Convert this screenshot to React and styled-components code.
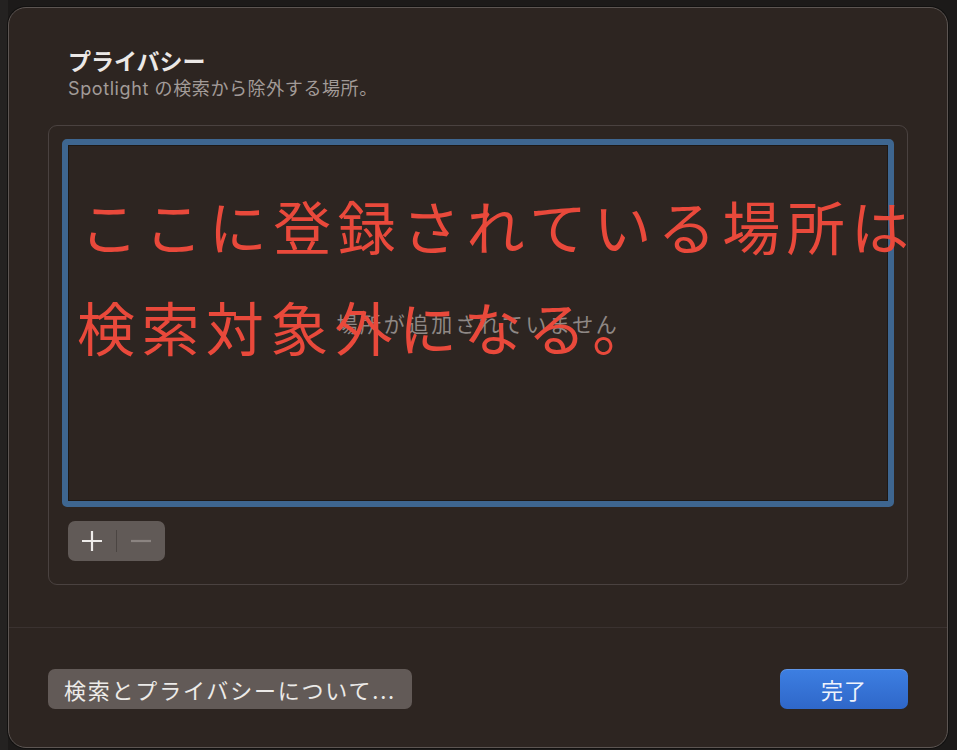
import React from 'react'
import styled, { createGlobalStyle } from 'styled-components'

const GlobalStyle = createGlobalStyle`
  html, body {
    margin: 0;
    padding: 0;
    background: #1d1b1a;
  }
  body {
    font-family: "Inter", "Noto Sans CJK JP", sans-serif;
    -webkit-font-smoothing: antialiased;
  }
`

const Page = styled.div`
  width: 957px;
  height: 750px;
  overflow: hidden;
  padding-top: 7px;
  box-sizing: border-box;
  background: linear-gradient(to right, #242221 0, #242221 8px, #1c1a19 8px);
`

const Dialog = styled.div`
  margin-left: 8px;
  width: 940px;
  height: 741px;
  box-sizing: border-box;
  background: #2d2521;
  border: 1px solid #5c5552;
  border-radius: 18px;
  box-shadow: 0 0 0 1px #121110;
  display: flex;
  flex-direction: column;
`

const Header = styled.div`
  padding: 37px 59px 0;
`

const Title = styled.div`
  font-family: "Noto Sans CJK JP", sans-serif;
  font-size: 23px;
  font-weight: 700;
  line-height: 30px;
  color: #ebe8e6;
`

const Subtitle = styled.div`
  margin-top: 1px;
  font-size: 18px;
  letter-spacing: 0.6px;
  line-height: 25px;
  color: #a29b98;
`

const Panel = styled.div`
  margin: 24px 39px 0;
  padding: 13px 13px 23px;
  border: 1px solid #4a4240;
  border-radius: 9px;
`

const List = styled.div`
  position: relative;
  height: 368px;
  box-sizing: border-box;
  border: 6px solid #3e6690;
  border-radius: 5px;
  box-shadow: inset 0 0 0 1px #1e1916;
  display: flex;
  align-items: center;
  justify-content: center;
`

const Placeholder = styled.div`
  font-family: "Noto Sans CJK JP", sans-serif;
  font-size: 21px;
  letter-spacing: 2.7px;
  color: #8f8885;
`

const Annotation = styled.div`
  position: absolute;
  left: ${p => p.$left}px;
  top: ${p => p.$top}px;
  white-space: nowrap;
  font-family: "Noto Sans CJK JP", sans-serif;
  font-size: 58px;
  font-weight: 400;
  letter-spacing: 6.4px;
  line-height: 1;
  color: #e9493b;
`

const Toolbar = styled.div`
  margin-top: 14px;
  padding-left: 6px;
`

const Segment = styled.div`
  display: inline-flex;
  align-items: center;
  width: 97px;
  height: 40px;
  background: #615a57;
  border-radius: 7px;
`

const SegButton = styled.div`
  flex: 1;
  display: flex;
  align-items: center;
  justify-content: center;
  color: ${p => (p.$disabled ? '#8b8481' : '#eeecea')};
`

const SegDivider = styled.div`
  width: 1px;
  height: 22px;
  background: #4b4542;
`

const Separator = styled.div`
  margin-top: 42px;
  height: 1px;
  background: #3a3230;
`

const Footer = styled.div`
  padding: 41px 39px 0;
  display: flex;
  justify-content: space-between;
`

const Button = styled.div`
  height: 40px;
  width: ${p => p.$width}px;
  box-sizing: border-box;
  border-radius: 7px;
  display: flex;
  align-items: center;
  justify-content: center;
  font-family: "Noto Sans CJK JP", sans-serif;
  font-size: 22px;
  letter-spacing: ${p => (p.$primary ? '1px' : '1.8px')};
  color: ${p => (p.$primary ? '#eef3fc' : '#eceae8')};
  background: ${p =>
    p.$primary ? 'linear-gradient(#3d7fe2, #2f67c9)' : '#625a57'};
  box-shadow: ${p => (p.$primary ? 'inset 0 1px 0 rgba(255,255,255,0.18)' : 'none')};
`

const Plus = () => (
  <svg width="22" height="22" viewBox="0 0 22 22">
    <path d="M11 1v20M1 11h20" stroke="currentColor" strokeWidth="2.2" />
  </svg>
)

const Minus = () => (
  <svg width="22" height="22" viewBox="0 0 22 22">
    <path d="M1 11h20" stroke="currentColor" strokeWidth="2.2" />
  </svg>
)

const App = () => {
  return (
    <>
      <GlobalStyle />
      <Page>
        <Dialog>
          <Header>
            <Title>プライバシー</Title>
            <Subtitle>Spotlight の検索から除外する場所。</Subtitle>
          </Header>
          <Panel>
            <List>
              <Placeholder>場所が追加されていません</Placeholder>
              <Annotation $left={12} $top={51}>ここに登録されている場所は</Annotation>
              <Annotation $left={9} $top={152}>検索対象外になる。</Annotation>
            </List>
            <Toolbar>
              <Segment>
                <SegButton><Plus /></SegButton>
                <SegDivider />
                <SegButton $disabled><Minus /></SegButton>
              </Segment>
            </Toolbar>
          </Panel>
          <Separator />
          <Footer>
            <Button $width={364}>検索とプライバシーについて...</Button>
            <Button $width={128} $primary>完了</Button>
          </Footer>
        </Dialog>
      </Page>
    </>
  )
}

export default App
